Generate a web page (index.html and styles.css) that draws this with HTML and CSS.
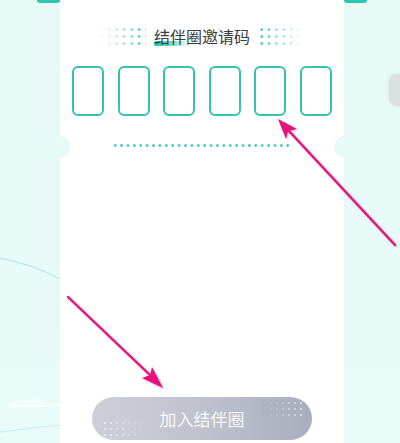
FILE: index.html
```html
<!DOCTYPE html>
<html lang="zh">
<head>
<meta charset="utf-8">
<title>结伴圈邀请码</title>
<link rel="stylesheet" href="styles.css">
</head>
<body>
<div class="page">
  <svg class="bg-lines" width="400" height="443" viewBox="0 0 400 443">
    <path d="M0 258 Q32 264 60 279" fill="none" stroke="#a9e6dc" stroke-width="1"/>
    <path d="M0 432 Q30 428 60 425" fill="none" stroke="#c5efe8" stroke-width="1"/>
    <path d="M8 404 Q22 398 30 400 Q36 392 42 402 L60 404 L60 407 L8 407 Z" fill="#f3fdfc"/>
  </svg>
  <span class="tab tab-left"></span>
  <span class="tab tab-right"></span>
  <span class="side-handle"></span>

  <main class="card">
    <span class="notch notch-left"></span>
    <span class="notch notch-right"></span>

    <div class="title-row">
      <span class="dots dots-left"></span>
      <h1 class="title">结伴圈邀请码</h1>
      <span class="dots dots-right"></span>
    </div>

    <div class="code-row">
      <span class="code-box"></span>
      <span class="code-box"></span>
      <span class="code-box"></span>
      <span class="code-box"></span>
      <span class="code-box"></span>
      <span class="code-box"></span>
    </div>

    <div class="tear-line"></div>

    <button class="join-btn" type="button">
      <span class="btn-dots btn-dots-left"></span>
      <span class="btn-label">加入结伴圈</span>
      <span class="btn-dots btn-dots-right"></span>
    </button>
  </main>

  <svg class="arrows" width="400" height="443" viewBox="0 0 400 443">
    <line x1="395" y1="245" x2="289" y2="131" stroke="#e5127c" stroke-width="2.4" stroke-linecap="round"/>
    <polygon points="278,119 297,129 288,131 286,139" fill="#e5127c"/>
    <line x1="68" y1="297" x2="150" y2="375" stroke="#e5127c" stroke-width="2.4" stroke-linecap="round"/>
    <polygon points="163,388 142,378 150,375 152,367" fill="#e5127c"/>
  </svg>
</div>
</body>
</html>
```

FILE: styles.css
```css
* {
  box-sizing: border-box;
}

html,
body {
  margin: 0;
  padding: 0;
}

body {
  width: 400px;
  height: 443px;
  overflow: hidden;
  font-family: "Noto Sans CJK SC", "Noto Sans", sans-serif;
  background: #e6f9f7;
}

.page {
  position: relative;
  width: 400px;
  height: 443px;
  overflow: hidden;
  background: linear-gradient(180deg, #e6faf8 0%, #e8fbf9 100%);
}

.bg-lines {
  position: absolute;
  left: 0;
  top: 0;
}

.tab {
  position: absolute;
  top: 0;
  width: 23px;
  height: 3px;
  background: #2ec6ae;
  border-radius: 0 0 3px 3px;
}

.tab-left {
  left: 37px;
}

.tab-right {
  left: 344px;
}

.side-handle {
  position: absolute;
  left: 389px;
  top: 74px;
  width: 20px;
  height: 32px;
  border-radius: 8px;
  background: #dcdfe0;
  box-shadow: 0 0 6px rgba(0, 0, 0, 0.08);
}

.card {
  position: relative;
  margin-left: 60px;
  width: 284px;
  height: 443px;
  background: #ffffff;
  display: flex;
  flex-direction: column;
  align-items: center;
  padding-bottom: 3px;
}

.notch {
  position: absolute;
  top: 136px;
  width: 20px;
  height: 22px;
  border-radius: 50%;
  background: #e7faf8;
}

.notch-left {
  left: -10px;
}

.notch-right {
  right: -10px;
}

.title-row {
  margin-top: 25px;
  display: flex;
  align-items: center;
  gap: 8px;
  height: 22px;
}

.title {
  position: relative;
  z-index: 0;
  margin: 0;
  font-size: 16px;
  line-height: 22px;
  font-weight: 400;
  color: #3a3c3e;
  letter-spacing: 0;
  white-space: nowrap;
}

.title::before {
  content: "";
  position: absolute;
  left: 0;
  top: 16px;
  width: 36px;
  height: 5px;
  border-radius: 2px 0 0 2px;
  background: linear-gradient(90deg, #1fc2a6 0%, #7fdcca 55%, rgba(160, 230, 218, 0) 100%);
  z-index: -1;
}

.dots {
  width: 48px;
  height: 21px;
}

.dots-left {
  background-image:
    linear-gradient(90deg, #ffffff 0%, rgba(255, 255, 255, 0.55) 50%, rgba(255, 255, 255, 0) 100%),
    radial-gradient(circle, #4fd0b5 1.3px, transparent 1.6px);
  background-size: 100% 100%, 7.5px 7px;
}

.dots-right {
  background-image:
    linear-gradient(270deg, #ffffff 0%, rgba(255, 255, 255, 0.55) 50%, rgba(255, 255, 255, 0) 100%),
    radial-gradient(circle, #4fd0b5 1.3px, transparent 1.6px);
  background-size: 100% 100%, 7.4px 7px;
}

.code-row {
  margin-top: 19px;
  display: flex;
  gap: 13.6px;
}

.code-box {
  display: block;
  width: 32px;
  height: 50px;
  border: 2px solid #33c3b3;
  border-radius: 6px;
}

.tear-line {
  margin-top: 28px;
  width: 181px;
  height: 3px;
  background-image: radial-gradient(circle, #3dc5b5 1.1px, transparent 1.5px);
  background-size: 6.4px 3px;
}

.join-btn {
  margin-top: auto;
  width: 220px;
  height: 43px;
  border: none;
  border-radius: 22px;
  padding: 0 10px;
  display: flex;
  align-items: center;
  justify-content: space-between;
  font-family: "Noto Sans CJK SC", "Noto Sans", sans-serif;
  font-size: 17px;
  font-weight: 400;
  color: rgba(255, 255, 255, 0.9);
  background: linear-gradient(90deg, #cdcfd8 0%, #bfc2cd 50%, #a9adbd 100%);
}

.btn-label {
  flex: none;
}

.btn-dots {
  width: 40px;
  height: 16px;
}

.btn-dots-left {
  align-self: flex-end;
  margin-bottom: 4px;
  background-image:
    linear-gradient(90deg, rgba(205, 207, 216, 0) 0%, rgba(205, 207, 216, 0.6) 60%, #c8cad4 100%),
    radial-gradient(circle, rgba(255, 255, 255, 0.55) 1px, transparent 1.4px);
  background-size: 100% 100%, 6px 6px;
}

.btn-dots-right {
  align-self: flex-start;
  margin-top: 3px;
  background-image:
    linear-gradient(270deg, rgba(170, 174, 190, 0) 0%, rgba(170, 174, 190, 0.6) 60%, #b0b3c2 100%),
    radial-gradient(circle, rgba(255, 255, 255, 0.5) 1px, transparent 1.4px);
  background-size: 100% 100%, 6px 6px;
}

.arrows {
  position: absolute;
  left: 0;
  top: 0;
  pointer-events: none;
  filter: drop-shadow(1px 1px 1px rgba(120, 0, 60, 0.35));
}
```
